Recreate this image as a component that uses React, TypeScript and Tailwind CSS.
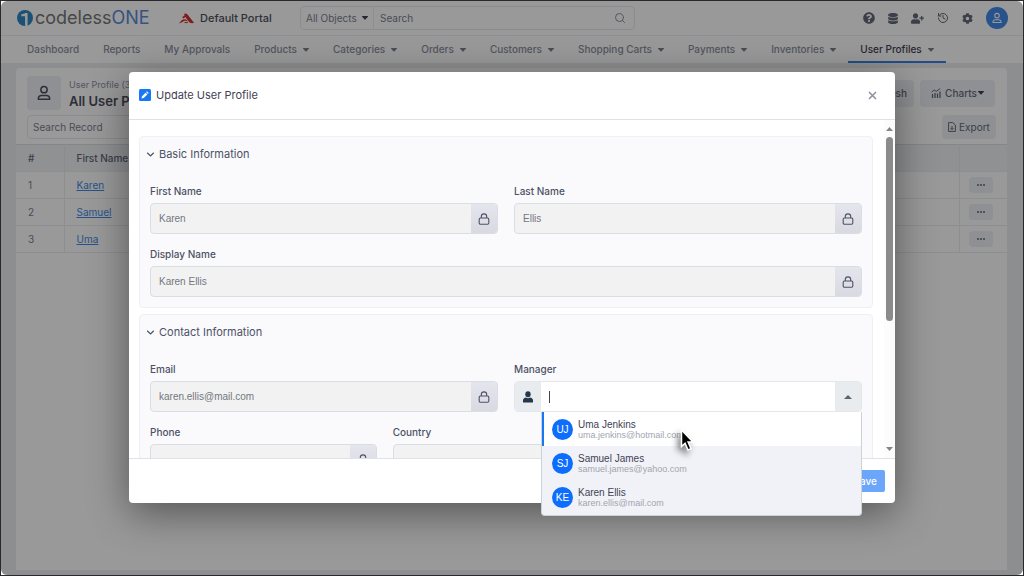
import { FaCog, FaDatabase, FaQuestionCircle, FaUserPlus } from 'react-icons/fa';
import { FiSearch } from 'react-icons/fi';
import { LuHistory } from 'react-icons/lu';

interface NavEntry {
  label: string;
  menu?: boolean;
  active?: boolean;
}

const navItems: NavEntry[] = [
  { label: 'Dashboard' },
  { label: 'Reports' },
  { label: 'My Approvals' },
  { label: 'Products', menu: true },
  { label: 'Categories', menu: true },
  { label: 'Orders', menu: true },
  { label: 'Customers', menu: true },
  { label: 'Shopping Carts', menu: true },
  { label: 'Payments', menu: true },
  { label: 'Inventories', menu: true },
  { label: 'User Profiles', menu: true, active: true },
];

const records = ['Karen', 'Samuel', 'Uma'];

const managers = [
  { initials: 'UJ', name: 'Uma Jenkins', email: 'uma.jenkins@hotmail.com' },
  { initials: 'SJ', name: 'Samuel James', email: 'samuel.james@yahoo.com' },
  { initials: 'KE', name: 'Karen Ellis', email: 'karen.ellis@mail.com' },
];

function Caret({ className = '' }: { className?: string }) {
  return (
    <svg className={`w-1.5 h-1 ${className}`} viewBox="0 0 6 4" fill="currentColor">
      <path d="M0.4 0h5.2a.4.4 0 0 1 .3.7L3.3 3.6a.4.4 0 0 1-.6 0L.1.7A.4.4 0 0 1 .4 0z" />
    </svg>
  );
}

function PersonOutline({ className = '' }: { className?: string }) {
  return (
    <svg className={className} viewBox="0 0 16 18" fill="none" stroke="currentColor" strokeWidth="1.7">
      <circle cx="8" cy="5.2" r="3.6" />
      <path d="M1.5 16.2v-.8a3.600 3.600 0 0 1 3.600-3.600h5.800a3.600 3.600 0 0 1 3.600 3.600v.8z" strokeLinejoin="round" />
    </svg>
  );
}

function LockIcon() {
  return (
    <svg className="w-3 h-3" viewBox="0 0 12 12" fill="none" stroke="#4d5166" strokeWidth="1.1">
      <rect x="1.2" y="5" width="9.6" height="6.3" rx="1.2" />
      <path d="M3.3 5V3.6a2.7 2.7 0 0 1 5.4 0V5" />
    </svg>
  );
}

function Header() {
  return (
    <header className="flex items-center h-[35px] border-b border-[#ebedf0] bg-white pl-4 pr-[15px]">
      <a href="#" className="flex items-center gap-0.5 w-[162px]">
        <svg className="w-4 h-4" viewBox="0 0 16 16">
          <circle cx="8" cy="8" r="8" fill="#2d87c4" />
          <path d="M4.300 4.200c2-.1 3.200-.5 4-1.200h2.300V16c-.8.200-1.600.200-2.500 0V6.300H4.300z" fill="#fff" />
        </svg>
        <span className="text-lg leading-5 text-[#777]">
          codeless<span className="text-[#5c8ad8]">ONE</span>
        </span>
      </a>
      <svg className="w-[15px] h-[11px] mr-1.5" viewBox="0 0 15 11" fill="#d6302f">
        <path d="M4.800.9C5.600.2 7.400.2 8.300 1.300L15 9.800c-2.300.8-4.200.3-5.300-1.200L6.300 4 4.300 5.600 3.200 4.300l2.700-2.300z" />
        <path d="M0 10.400C1.500 8.300 3.600 6 6 6.200c1.300.1 2.100 1 2.900 2.200-1.500-.6-2.800-.9-4-.3C3.900 8.600 2.600 10 0 10.400z" />
        <path d="M5 9.200c1.500-.6 3-.3 4.600.6-1.500.7-3.300.5-4.600-.6z" />
      </svg>
      <span className="text-[11px] font-medium text-[#4c5060] w-[100px]">Default Portal</span>

      <div className="flex items-center h-6 w-[335px] border border-[#e6e9ee] rounded-sm text-[10px] text-[#7c8090]">
        <button className="flex items-center gap-[5px] h-full pl-[5px] w-[73px] border-r border-[#eceef2]">
          All Objects <Caret className="text-[#3f4254]" />
        </button>
        <input
          aria-label="Search"
          placeholder="Search"
          className="flex-1 min-w-0 px-1.5 outline-none placeholder:text-[#7c8090]"
        />
        <FiSearch className="w-3 h-3 mr-2 text-[#8a8fa0]" />
      </div>

      <div className="ml-auto flex items-center gap-[13px] text-[#646978]">
        <FaQuestionCircle className="w-3 h-3" />
        <FaDatabase className="w-2.5 h-[11px]" />
        <FaUserPlus className="w-[13px] h-[13px]" />
        <LuHistory className="w-3 h-3" />
        <FaCog className="w-[11px] h-[11px]" />
        <span className="w-[22px] h-[22px] rounded-full bg-[#4389ea] text-white flex items-center justify-center">
          <PersonOutline className="w-2.5 h-3" />
        </span>
      </div>
    </header>
  );
}

function Nav() {
  return (
    <nav className="flex h-[27px] bg-white pl-3.5 text-[10px] font-medium text-[#8a8fa0]">
      {navItems.map((item) => (
        <a
          key={item.label}
          href="#"
          className={`flex items-center gap-1.5 px-3 border-y-2 border-t-transparent whitespace-nowrap ${
            item.active ? 'border-b-[#3b82e6] text-[#3f4254]' : 'border-b-transparent'
          }`}
        >
          {item.label}
          {item.menu && <Caret className="text-[#7c8090]" />}
        </a>
      ))}
    </nav>
  );
}

function RecordList() {
  return (
    <main className="flex-1 bg-[#ebedf1] pl-[15px] pr-4 py-[5px] flex flex-col">
      <div className="flex-1 bg-white rounded-t-sm">
        <div className="flex items-center justify-between h-10 mt-[5px] pl-[11px] pr-3">
          <div className="flex items-center gap-2">
            <div className="w-[34px] h-[34px] rounded bg-[#eff1f5] text-[#4c5060] flex items-center justify-center">
              <PersonOutline className="w-3.5 h-4" />
            </div>
            <div className="text-[#4c5060]">
              <p className="text-[9px] leading-4 text-[#8a8fa0]">User Profile (3 Records)</p>
              <h1 className="text-[13px] leading-4 font-semibold">All User Profiles</h1>
            </div>
          </div>
          <div className="flex gap-1.5 text-[10px] font-medium text-[#646978]">
            <button className="h-[27px] px-[7px] rounded-sm bg-[#eff1f5]">Refresh</button>
            <button className="flex items-center justify-center h-[27px] w-[75px] rounded-sm bg-[#eff1f5]">
              <svg className="w-2.5 h-2.5 mr-1" viewBox="0 0 10 10" fill="none" stroke="currentColor">
                <path d="M.5 4.2 3.2 2l2 1.4L9.2.6" />
                <path d="M1.5 6v4M4 5v5M6.500 5.500v4.500M9 3.500V10" strokeWidth="1.300" />
              </svg>
              Charts
              <Caret className="ml-px text-[#3f4254]" />
            </button>
          </div>
        </div>

        <div className="flex items-center justify-between h-7 pl-[11px] pr-[11px] mb-[3px]">
          <input
            aria-label="Search Record"
            placeholder="Search Record"
            className="h-6 w-56 px-[5px] rounded-sm border border-[#e6e9ee] text-[10px] placeholder:text-[#7c8090]"
          />
          <button className="flex items-center justify-center gap-[3px] h-6 w-[54px] rounded-sm bg-[#eff1f5] text-[10px] text-[#646978]">
            <svg className="w-2 h-2.5" viewBox="0 0 8 10" fill="none" stroke="currentColor">
              <path d="M.6.6h4.200L7.400 3v6.400H.6zM4 4v3.500M2.500 6 4 7.500 5.500 6" />
            </svg>
            Export
          </button>
        </div>

        <table className="w-full table-fixed text-[10px] text-left text-[#7c8090]">
          <thead>
            <tr className="h-[27px] bg-[#f0f2f6] border-t border-[#dcdfe5] text-[#646978]">
              <th className="w-12 pl-3 font-medium border-r border-[#e6e9ee]">#</th>
              <th className="pl-3 font-medium">First Name</th>
              <th className="w-12 border-l border-[#e6e9ee]" />
            </tr>
          </thead>
          <tbody>
            {records.map((name, i) => (
              <tr key={name} className="h-[27px] border-y border-[#ebedf0]">
                <td className="pl-3 border-r border-[#ebedf0]">{i + 1}</td>
                <td className="pl-3">
                  <a href="#" className="text-[#4389ea] underline">
                    {name}
                  </a>
                </td>
                <td className="pl-[9px] border-l border-[#ebedf0]">
                  <button
                    aria-label={`Actions for ${name}`}
                    className="flex items-center justify-center gap-px w-6 h-4 rounded-sm bg-[#eff1f5]"
                  >
                    <span className="w-0.5 h-0.5 rounded-full bg-[#646978]" />
                    <span className="w-0.5 h-0.5 rounded-full bg-[#646978]" />
                    <span className="w-0.5 h-0.5 rounded-full bg-[#646978]" />
                  </button>
                </td>
              </tr>
            ))}
          </tbody>
        </table>
      </div>
    </main>
  );
}

interface FieldProps {
  id: string;
  label?: string;
  value?: string;
}

function LockedField({ id, label, value = '' }: FieldProps) {
  return (
    <div className="flex-1 min-w-0">
      {label && (
        <label htmlFor={id} className="block mb-1 text-[10px] leading-4 font-medium text-[#4c5166]">
          {label}
        </label>
      )}
      <div className="flex h-[31px] rounded border border-[#d9dde4] overflow-hidden bg-[#f2f2f2]">
        <input
          id={id}
          aria-label={label ? undefined : id}
          readOnly
          value={value}
          className="flex-1 min-w-0 px-2 font-['Liberation_Sans',sans-serif] text-[10px] text-[#74777d] outline-none"
        />
        <span className="w-[26px] flex items-center justify-center bg-linear-to-b from-[#e4e5ed] to-[#d9dae1]">
          <LockIcon />
        </span>
      </div>
    </div>
  );
}

function ManagerField() {
  return (
    <div className="flex-1 min-w-0">
      <label htmlFor="manager" className="block mb-1 text-[10px] leading-4 font-medium text-[#4c5166]">
        Manager
      </label>
      <div className="flex h-[31px] rounded border border-[#e4e7eb] overflow-hidden bg-white">
        <span className="w-[26px] flex items-center justify-center bg-[#e9ecef]">
          <svg className="w-2.5 h-3" viewBox="0 0 10 12" fill="#27364b">
            <ellipse cx="5" cy="3.2" rx="2.700" ry="3" />
            <path d="M0 11.500V9.500C0 7.800 1.400 6.800 3 6.600c1.200.7 2.800.7 4 0 1.600.2 3 1.200 3 2.900v2z" />
          </svg>
        </span>
        <div className="flex-1 flex items-center pl-2">
          <span className="w-px h-3 bg-[#3f4254]" />
          <input
            id="manager"
            role="combobox"
            aria-expanded="true"
            aria-controls="manager-options"
            className="flex-1 min-w-0 text-[10px] outline-none"
          />
        </div>
        <button aria-label="Close list" className="w-[26px] flex items-center justify-center bg-[#e9ecef]">
          <svg className="w-2 h-1" viewBox="0 0 8 4" fill="#5e6470">
            <path d="M4 0l4 4H0z" />
          </svg>
        </button>
      </div>
    </div>
  );
}

function Section({ title, children }: { title: string; children: React.ReactNode }) {
  return (
    <section className="px-1.5 pb-2.5 mb-1.5 rounded-sm border border-[#eef0f3] bg-[#fafafc]">
      <h3 className="flex items-center gap-1 h-[34px] mb-3 text-[11px] text-[#4c5166]">
        <svg className="w-[9px] h-[9px]" viewBox="0 0 9 9" fill="none" stroke="currentColor" strokeWidth="1.200">
          <path d="M1.200 2.800 4.500 6l3.300-3.200" />
        </svg>
        {title}
      </h3>
      <div className="flex flex-col gap-3 px-1">{children}</div>
    </section>
  );
}

function ManagerOptions() {
  return (
    <ul
      id="manager-options"
      role="listbox"
      className="absolute top-[340px] right-[33px] w-[321px] pb-px rounded-b-sm border border-t-0 border-[#cdd1d8] bg-[#f1f2f7] font-['Liberation_Sans',sans-serif]"
    >
      {managers.map((m, i) => (
        <li
          key={m.email}
          role="option"
          aria-selected={i === 0}
          className={`flex items-center gap-[5px] h-[34px] pl-2 border-l-2 ${
            i === 0 ? 'bg-white border-[#1877f2]' : 'border-transparent'
          }`}
        >
          <span className="w-[21px] h-[21px] rounded-full bg-[#0d6efd] text-white text-[10px] flex items-center justify-center">
            {m.initials}
          </span>
          <span className="flex flex-col pt-px">
            <span className="text-[10px] leading-[11px] text-[#3f4254]">{m.name}</span>
            <span className="text-[9px] leading-[11px] text-[#a1a5b0]">{m.email}</span>
          </span>
        </li>
      ))}
      {/* mouse pointer hovering the first option */}
      <svg className="absolute left-[136px] top-4 w-5 h-7 overflow-visible drop-shadow-[-3px_4px_3px_rgba(0,0,0,0.5)]" viewBox="0 0 20 28">
        <path
          d="M3.500 2v16.500l3.600-3.300 2.900 6.800 3-1.300-2.900-6.600h4.900z"
          fill="#000"
          stroke="#fff"
          strokeWidth="1.500"
        />
      </svg>
    </ul>
  );
}

function UpdateModal() {
  return (
    <div
      role="dialog"
      aria-label="Update User Profile"
      className="relative w-full mt-[71px] rounded-sm bg-white shadow-[0_10px_40px_rgba(0,0,0,0.45)]"
    >
      <div className="flex items-center h-12 px-2.5 pb-px border-b border-[#dee2e8]">
        <svg className="w-3 h-3" viewBox="0 0 12 12">
          <rect width="12" height="12" rx="1.500" fill="#1877f2" />
          <path d="M2.500 9.500l.5-2.300 3.500-3.500 1.800 1.800L4.800 9zM7.100 3.100l.8-.8 1.800 1.800-.8.8z" fill="#fff" />
        </svg>
        <h2 className="ml-[5px] text-[11px] text-[#3f4254]">Update User Profile</h2>
        <button aria-label="Close" className="ml-auto mr-2 text-[#8a919e]">
          <svg className="w-[9px] h-[9px]" viewBox="0 0 9 9" stroke="currentColor" strokeWidth="1.500">
            <path d="M1 1l7 7M8 1 1 8" />
          </svg>
        </button>
      </div>

      <div className="flex h-[338px]">
        <div className="flex-1 min-w-0 overflow-hidden pt-4 pl-2.5 pr-[11px]">
          <Section title="Basic Information">
            <div className="flex gap-4">
              <LockedField id="first-name" label="First Name" value="Karen" />
              <LockedField id="last-name" label="Last Name" value="Ellis" />
            </div>
            <LockedField id="display-name" label="Display Name" value="Karen Ellis" />
          </Section>
          <Section title="Contact Information">
            <div className="flex gap-4">
              <LockedField id="email" label="Email" value="karen.ellis@mail.com" />
              <ManagerField />
            </div>
            <div className="flex items-end gap-4">
              <LockedField id="phone" label="Phone" />
              <LockedField id="country" label="Country" />
              <LockedField id="city" />
            </div>
          </Section>
        </div>
        <div className="flex flex-col items-center w-[11px] py-[7px] bg-[#fcfcfc]">
          <svg className="w-[7px] h-1" viewBox="0 0 7 4" fill="#858585">
            <path d="M3.500 0 7 4H0z" />
          </svg>
          <div className="mt-1.5 w-[7px] h-[184px] rounded-full bg-[#8b8b8b]" />
          <svg className="mt-auto w-[7px] h-1" viewBox="0 0 7 4" fill="#858585">
            <path d="M0 0h7L3.500 4z" />
          </svg>
        </div>
      </div>

      <div className="flex items-center justify-end h-[45px] px-2.5 border-t border-[#dee2e8]">
        <button className="h-[22px] px-2 rounded-xs bg-[#6ba6fa] text-[10px] font-medium text-white">Save</button>
      </div>

      <ManagerOptions />
    </div>
  );
}

export default function App() {
  return (
    <div className="min-h-screen flex flex-col bg-[#2b292b] p-px font-[Inter,sans-serif]">
      <div className="flex-1 flex bg-white">
        <div className="relative flex-1 min-w-0 flex flex-col rounded-md overflow-hidden">
          <Header />
          <Nav />
          <RecordList />
          <div className="absolute inset-0 bg-black/40 px-32 flex items-start justify-center">
            <UpdateModal />
          </div>
        </div>
      </div>
    </div>
  );
}
